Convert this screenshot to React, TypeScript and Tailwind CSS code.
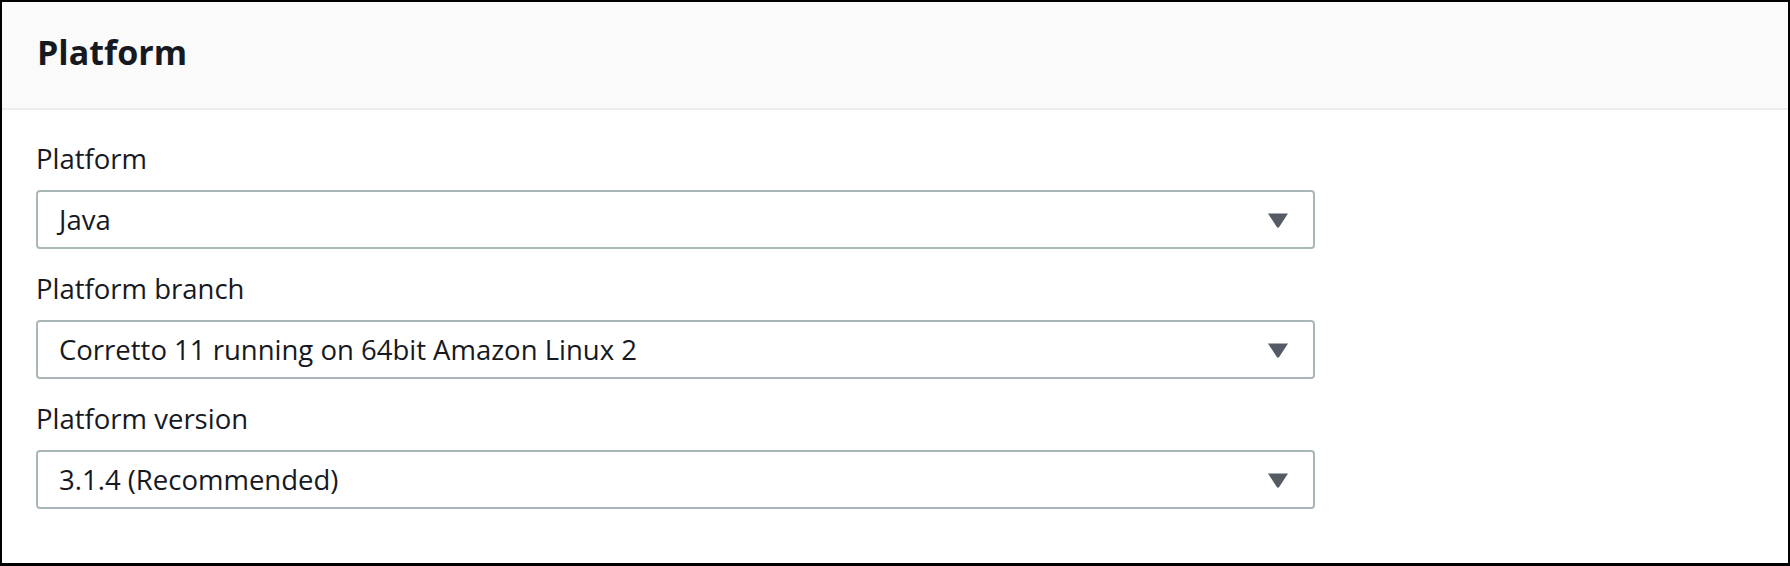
import { useState } from "react";

interface SelectFieldProps {
  label: string;
  value: string;
}

// Solid down caret, same shape as the console's select indicator
function Caret() {
  return (
    <svg width="20" height="15" viewBox="0 0 20 15" className="shrink-0">
      <path d="M0 0.5 H20 L11.2 14 Q10 15.6 8.8 14 Z" fill="#545b64" />
    </svg>
  );
}

function SelectField({ label, value }: SelectFieldProps) {
  return (
    <div className="flex flex-col">
      <label className="text-[27.5px] leading-[36px] text-[#16191f] mb-[13px]">
        {label}
      </label>
      <button
        type="button"
        className="flex items-center justify-between w-[1279px] h-[59px] border-2 border-[#aab7b8] rounded-[4px] bg-white pl-[21px] pr-[25px] pt-[1px] text-left"
      >
        <span className="text-[27.5px] leading-[36px] text-[#16191f]">{value}</span>
        <Caret />
      </button>
    </div>
  );
}

export default function App() {
  const [fields] = useState([
    { label: "Platform", value: "Java" },
    { label: "Platform branch", value: "Corretto 11 running on 64bit Amazon Linux 2" },
    { label: "Platform version", value: "3.1.4 (Recommended)" },
  ]);

  return (
    <div
      className="w-[1790px] h-[566px] bg-white border-2 border-b-[3px] border-black flex flex-col"
      style={{ fontFamily: '"Open Sans", "Noto Sans", sans-serif' }}
    >
      {/* Container header */}
      <div className="bg-[#fafafa] border-b-2 border-[#eaeded] h-[108px] pl-[35px] pt-[27px]">
        <h2 className="text-[34px] leading-[46px] font-bold text-[#16191f]">Platform</h2>
      </div>

      {/* Form fields */}
      <div className="flex flex-col gap-[22px] pl-[34px] pt-[31px]">
        {fields.map(f => (
          <SelectField key={f.label} label={f.label} value={f.value} />
        ))}
      </div>
    </div>
  );
}
